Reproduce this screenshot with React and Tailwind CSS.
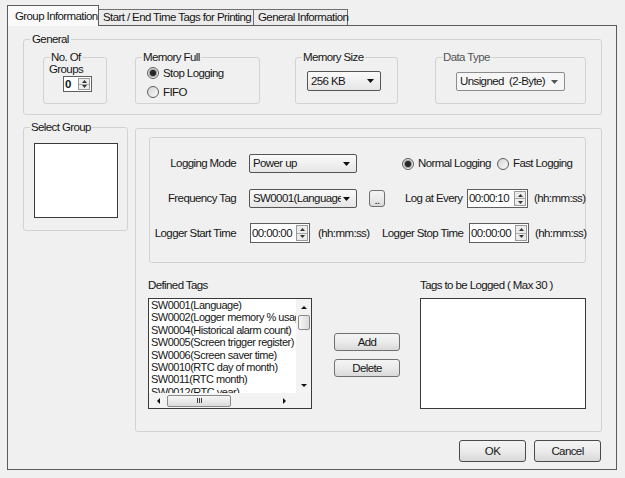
import React from 'react'

const tags = [
  'SW0001(Language)',
  'SW0002(Logger memory % usage)',
  'SW0004(Historical alarm count)',
  'SW0005(Screen trigger register)',
  'SW0006(Screen saver time)',
  'SW0010(RTC day of month)',
  'SW0011(RTC month)',
  'SW0012(RTC year)',
]

// small filled triangle used for combo / scroll / spin arrows
const Tri = ({ dir = 'down', size = 7, color = '#111' }) => {
  const half = size / 2
  const depth = Math.ceil(size / 2)
  const vertical = dir === 'up' || dir === 'down'
  const w = vertical ? size : depth
  const h = vertical ? depth : size
  const pts = {
    down: `0,0 ${size},0 ${half},${depth}`,
    up: `0,${depth} ${size},${depth} ${half},0`,
    left: `${depth},0 ${depth},${size} 0,${half}`,
    right: `0,0 0,${size} ${depth},${half}`,
  }[dir]
  return (
    <svg width={w} height={h} viewBox={`0 0 ${w} ${h}`} className="block">
      <polygon points={pts} fill={color} />
    </svg>
  )
}

const GroupBox = ({ title, className = '', legendClass = '', children }) => (
  <fieldset className={`rounded-[3px] border border-[#d2d2d2] ${className}`}>
    <legend className={`ml-[6px] px-[1px] leading-[13px] ${legendClass}`}>{title}</legend>
    {children}
  </fieldset>
)

const Radio = ({ checked }) => (
  <span className="flex h-[12px] w-[12px] shrink-0 items-center justify-center rounded-full border border-[#5e5e5e] bg-linear-to-br from-[#d4d4d4] to-[#fbfbfb]">
    {checked && <span className="h-[6px] w-[6px] rounded-full bg-[#262626] ring-1 ring-[#9a9a9a]" />}
  </span>
)

const Combo = ({ value, className = '', tone = 'dark' }) => (
  <div
    className={`flex shrink-0 items-center overflow-hidden rounded-[2px] border ${
      tone === 'dark'
        ? 'border-[#555] bg-linear-to-b from-[#fafafa] to-[#e6e6e6]'
        : 'border-[#8c8c8c] bg-[#f6f6f6]'
    } ${className}`}
  >
    <span className="flex-1 overflow-hidden whitespace-pre pl-[3px]">{value}</span>
    <span className="ml-[2px] mr-[6px]">
      <Tri dir="down" size={7} color={tone === 'dark' ? '#111' : '#555'} />
    </span>
  </div>
)

const Spinner = ({ value, className = '', bold = false }) => (
  <div className={`flex shrink-0 border border-[#5f5f5f] bg-white ${className}`}>
    <div className={`flex flex-1 items-center pl-[1px] ${bold ? 'font-bold' : ''}`}>{value}</div>
    <div className="my-[1px] mr-[1px] flex w-[12px] flex-col border border-[#9a9a9a] bg-[#ececec]">
      <div className="flex flex-1 items-center justify-center border-b border-[#a8a8a8]">
        <Tri dir="up" size={5} color="#333" />
      </div>
      <div className="flex flex-1 items-center justify-center">
        <Tri dir="down" size={5} color="#333" />
      </div>
    </div>
  </div>
)

const Btn = ({ children, className = '', dark = false }) => (
  <div
    className={`flex shrink-0 items-center justify-center rounded-[3px] border bg-linear-to-b from-[#f4f4f4] via-[#ebebeb] to-[#d9d9d9] ${
      dark ? 'border-[#4a4a4a]' : 'border-[#707070]'
    } ${className}`}
  >
    {children}
  </div>
)

const TagList = () => (
  <div className="mt-[6px] flex h-[111px] w-[164px] flex-col border border-[#3a3a3a] bg-white">
    <div className="flex h-[94px]">
      <div className="flex-1 overflow-hidden pl-[2px] text-[11px] leading-[12.4px] tracking-[-0.5px]">
        {tags.map(t => (
          <div key={t}>{t}</div>
        ))}
      </div>
      <div className="flex w-[15px] flex-col items-center bg-[#f3f3f3]">
        <div className="mt-[7px]">
          <Tri dir="up" size={6} />
        </div>
        <div className="mt-[6px] h-[15px] w-[12px] rounded-[2px] border border-[#8a8a8a] bg-linear-to-r from-[#f6f6f6] to-[#dcdcdc]" />
        <div className="mb-[6px] mt-auto">
          <Tri dir="down" size={6} />
        </div>
      </div>
    </div>
    <div className="flex h-[15px] items-center bg-[#f3f3f3]">
      <div className="ml-[8px]">
        <Tri dir="left" size={6} />
      </div>
      <div className="ml-[7px] flex h-[12px] w-[64px] items-center justify-center gap-[1px] rounded-[2px] border border-[#8a8a8a] bg-linear-to-b from-[#f6f6f6] to-[#dcdcdc]">
        <span className="h-[5px] w-px bg-[#444]" />
        <span className="h-[5px] w-px bg-[#444]" />
        <span className="h-[5px] w-px bg-[#444]" />
      </div>
      <div className="ml-[52px]">
        <Tri dir="right" size={6} />
      </div>
    </div>
  </div>
)

const App = () => {
  return (
    <div className="h-[478px] w-[625px] overflow-hidden whitespace-nowrap bg-[#f0f0f0] font-['Liberation_Sans',Arial,sans-serif] text-[11.5px] leading-[13px] tracking-[-0.6px] text-[#161616]">
      {/* tabs */}
      <div className="flex items-end pl-[7px] pt-[5px]">
        <div className="relative z-10 -mb-px h-[21px] w-[92px] border border-b-0 border-[#5c5c5c] bg-[#fafafa] pl-[7px] pt-[4px]">
          Group Information
        </div>
        <div className="h-[16px] w-[155px] border border-b-0 border-l-0 border-[#6f6f6f] bg-[#ececec] pl-[4px] pt-[1px]">
          Start / End Time Tags for Printing
        </div>
        <div className="h-[16px] w-[94px] border border-b-0 border-l-0 border-[#6f6f6f] bg-[#ececec] pl-[4px] pt-[1px]">
          General Information
        </div>
      </div>

      {/* tab page */}
      <div className="ml-[7px] flex h-[445px] w-[610px] flex-col border border-[#5c5c5c]">
        <GroupBox title="General" className="ml-[15px] mt-[7px] h-[82px] w-[579px]" legendClass="ml-[5px] px-[2px]">
          <div className="mt-[5px] flex">
            <GroupBox title="No. Of" className="ml-[19px] h-[53px] w-[64px]" legendClass="ml-[5px]">
              <div className="-mt-px pl-[5px]">Groups</div>
              <Spinner value="0" bold className="ml-[19px] h-[16px] w-[29px]" />
            </GroupBox>

            <GroupBox title="Memory Full" className="ml-[28px] h-[53px] w-[125px]">
              <div className="ml-[11px] mt-px flex h-[16px] items-center gap-[4px]">
                <Radio checked />
                <span>Stop Logging</span>
              </div>
              <div className="ml-[11px] mt-[3px] flex h-[16px] items-center gap-[4px]">
                <Radio />
                <span>FIFO</span>
              </div>
            </GroupBox>

            <GroupBox title="Memory Size" className="ml-[35px] h-[53px] w-[103px]">
              <Combo value="256 KB" className="ml-[11px] mt-[7px] h-[20px] w-[74px]" />
            </GroupBox>

            <GroupBox title="Data Type" className="ml-[37px] h-[53px] w-[151px]" legendClass="text-[#555]">
              <Combo value="Unsigned  (2-Byte)" tone="light" className="ml-[20px] mt-[8px] h-[19px] w-[109px]" />
            </GroupBox>
          </div>
        </GroupBox>

        <div className="mt-[6px] flex items-start">
          <GroupBox title="Select Group" className="ml-[15px] h-[110px] w-[105px]">
            <div className="ml-[10px] mt-[9px] h-[75px] w-[84px] border border-[#3a3a3a] bg-white" />
          </GroupBox>

          <div className="ml-[7px] mt-[7px] flex h-[304px] w-[467px] flex-col rounded-[3px] border border-[#d2d2d2]">
            <div className="ml-[13px] mt-[8px] h-[126px] w-[437px] rounded-[3px] border border-[#d2d2d2]">
              {/* row 1 */}
              <div className="mt-[16px] flex h-[19px] items-center">
                <span className="w-[86px] shrink-0 text-right">Logging Mode</span>
                <Combo value="Power up" className="ml-[13px] h-[19px] w-[108px]" />
                <span className="ml-[45px]">
                  <Radio checked />
                </span>
                <span className="ml-[4px] w-[75px] shrink-0">Normal Logging</span>
                <span className="ml-[4px]">
                  <Radio />
                </span>
                <span className="ml-[4px]">Fast Logging</span>
              </div>
              {/* row 2 */}
              <div className="mt-[16px] flex h-[19px] items-center">
                <span className="w-[86px] shrink-0 text-right">Frequency Tag</span>
                <Combo value="SW0001(Language)" className="ml-[13px] h-[19px] w-[108px]" />
                <Btn className="ml-[12px] h-[17px] w-[16px] items-end pb-[1px] leading-[9px]">..</Btn>
                <span className="ml-[20px] w-[56px] shrink-0">Log at Every</span>
                <Spinner value="00:00:10" className="ml-[6px] h-[19px] w-[61px]" />
                <span className="ml-[6px]">(hh:mm:ss)</span>
              </div>
              {/* row 3 */}
              <div className="mt-[15px] flex h-[20px] items-center">
                <span className="w-[86px] shrink-0 text-right">Logger Start Time</span>
                <Spinner value="00:00:00" className="ml-[14px] h-[20px] w-[60px]" />
                <span className="ml-[8px] w-[52px] shrink-0">(hh:mm:ss)</span>
                <span className="ml-[12px] w-[81px] shrink-0">Logger Stop Time</span>
                <Spinner value="00:00:00" className="ml-[6px] h-[20px] w-[60px]" />
                <span className="ml-[6px]">(hh:mm:ss)</span>
              </div>
            </div>

            <div className="ml-[12px] mt-[16px] flex">
              <div className="flex flex-col">
                <div className="h-[13px]">Defined Tags</div>
                <TagList />
              </div>
              <div className="ml-[22px] flex w-[66px] flex-col">
                <Btn className="mt-[54px] h-[18px]">Add</Btn>
                <Btn className="mt-[8px] h-[18px]">Delete</Btn>
              </div>
              <div className="ml-[20px] flex flex-col">
                <div className="h-[13px]">Tags to be Logged ( Max 30 )</div>
                <div className="mt-[6px] h-[111px] w-[166px] border border-[#3a3a3a] bg-white" />
              </div>
            </div>
          </div>
        </div>

        <div className="mt-[8px] flex justify-end gap-[8px] pr-[15px]">
          <Btn dark className="h-[22px] w-[67px]">OK</Btn>
          <Btn dark className="h-[22px] w-[67px]">Cancel</Btn>
        </div>
      </div>
    </div>
  )
}

export default App
